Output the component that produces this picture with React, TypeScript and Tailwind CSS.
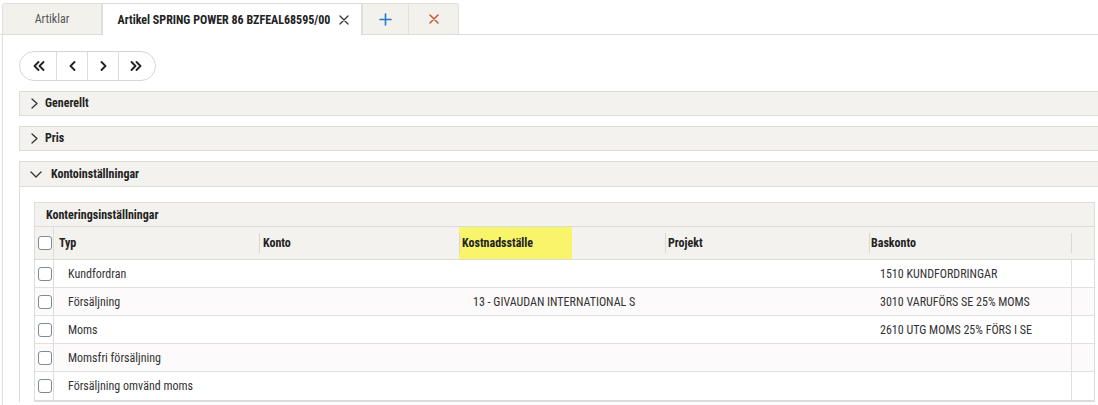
const FONT = "font-['Roboto_Condensed','Liberation_Sans_Narrow',Roboto,sans-serif]"

const rows = [
  { typ: 'Kundfordran', konto: '', kst: '', projekt: '', bas: '1510 KUNDFORDRINGAR' },
  { typ: 'Försäljning', konto: '', kst: '13 - GIVAUDAN INTERNATIONAL S', projekt: '', bas: '3010 VARUFÖRS SE 25% MOMS' },
  { typ: 'Moms', konto: '', kst: '', projekt: '', bas: '2610 UTG MOMS 25% FÖRS I SE' },
  { typ: 'Momsfri försäljning', konto: '', kst: '', projekt: '', bas: '' },
  { typ: 'Försäljning omvänd moms', konto: '', kst: '', projekt: '', bas: '' },
]

function Icon({ d, w, h, color, sw = 1.4 }: { d: string; w: number; h: number; color: string; sw?: number }) {
  return (
    <svg width={w} height={h} viewBox={`0 0 ${w} ${h}`} fill="none" stroke={color} strokeWidth={sw} strokeLinecap="round" strokeLinejoin="round">
      <path d={d} />
    </svg>
  )
}

function Box() {
  return <span className="block h-[14px] w-[14px] rounded-[3px] border border-[#7d8b96] bg-white" />
}

function Section({ title }: { title: string }) {
  return (
    <div className="flex h-[25px] w-[1090px] items-center border border-[#dddbd6] bg-[#f4f2ee] pb-px pl-[11px] text-[12px] font-bold text-[#222]">
      <span className="mr-[7px]">
        <Icon w={7} h={11} d="M1 1 L6 5.5 L1 10" color="#333" sw={1.3} />
      </span>
      {title}
    </div>
  )
}

export default function App() {
  return (
    <div className={`${FONT} h-[405px] w-[1098px] overflow-hidden bg-white`}>
      {/* tabs */}
      <div className="flex h-[35px] items-end border-b border-[#dcdcdc] pl-[2px] pt-[3px]">
        <div className="flex h-[31px] w-[100px] items-center justify-center rounded-tl-[3px] border border-b-0 border-[#e2e0dc] bg-[#f3f1ec] text-[12px] text-[#555]">
          Artiklar
        </div>
        <div className="-mb-px flex h-[32px] w-[260px] items-center justify-center gap-[9px] border border-b-0 border-[#dcdcdc] bg-white pl-[3px] text-[12px] font-bold text-[#222]">
          Artikel SPRING POWER 86 BZFEAL68595/00
          <Icon w={10} h={10} d="M1 1 L9 9 M9 1 L1 9" color="#333" sw={1.3} />
        </div>
        <div className="flex h-[31px] w-[47px] items-center justify-center border border-b-0 border-[#e2e0dc] bg-[#f3f1ec]">
          <Icon w={13} h={13} d="M6.5 1 V12 M1 6.5 H12" color="#1f78d1" sw={1.6} />
        </div>
        <div className="flex h-[31px] w-[50px] items-center justify-center rounded-tr-[3px] border border-b-0 border-l-0 border-[#e2e0dc] bg-[#f3f1ec]">
          <Icon w={10} h={10} d="M1 1 L9 9 M9 1 L1 9" color="#cf4a2c" sw={1.4} />
        </div>
      </div>

      <div className="ml-[2px] h-full border-l border-[#dcdcdc] pl-[16px] pt-[16px]">
        {/* pager */}
        <div className="flex h-[30px] w-[137px] overflow-hidden rounded-full border border-[#d6d6d6] bg-white">
          <div className="flex w-[37px] items-center justify-center border-r border-[#dcdcdc] pl-[2px]">
            <Icon w={12} h={10} d="M5.5 1 L1.5 5 L5.5 9 M10.5 1 L6.5 5 L10.5 9" color="#222" sw={1.8} />
          </div>
          <div className="flex w-[31px] items-center justify-center border-r border-[#dcdcdc]">
            <Icon w={7} h={10} d="M5.5 1 L1.5 5 L5.5 9" color="#222" sw={1.8} />
          </div>
          <div className="flex w-[31px] items-center justify-center border-r border-[#dcdcdc]">
            <Icon w={7} h={10} d="M1.5 1 L5.5 5 L1.5 9" color="#222" sw={1.8} />
          </div>
          <div className="flex flex-1 items-center justify-center pr-[2px]">
            <Icon w={12} h={10} d="M1.5 1 L5.5 5 L1.5 9 M6.5 1 L10.5 5 L6.5 9" color="#222" sw={1.8} />
          </div>
        </div>

        <div className="mt-[10px] flex flex-col gap-[10px]">
          <Section title="Generellt" />
          <Section title="Pris" />
          <div className="w-[1090px]">
            <div className="flex h-[26px] items-center border border-[#dddbd6] bg-[#f4f2ee] pl-[10px] text-[12px] font-bold text-[#222]">
              <span className="mr-[9px]">
                <Icon w={12} h={7} d="M1 1 L6 6 L11 1" color="#333" sw={1.3} />
              </span>
              Kontoinställningar
            </div>
            <div className="border-l border-[#dddbd6] pl-[14px] pt-[15px]">
              <div className="w-[1061px] border border-b-2 border-[#dcdcdc] text-[12px] text-[#333]">
                <div className="flex h-[24px] items-center border-b border-[#dcdcdc] bg-[#f4f2ee] pl-[11px] font-bold text-[#222]">
                  Konteringsinställningar
                </div>
                <div className="flex h-[33px] items-stretch border-b border-[#dcdcdc] bg-[#f4f2ee] font-bold text-[#222]">
                  <div className="flex w-[19px] items-center justify-center border-r border-[#dcdcdc] pl-[1px]">
                    <Box />
                  </div>
                  <div className="flex w-[205px] items-center pl-[5px]">Typ</div>
                  <div className="my-[6px] w-px bg-[#d8d8d8]" />
                  <div className="flex w-[199px] items-center pl-[3px]">Konto</div>
                  <div className="flex w-[113px] items-center bg-[#f8f56a] pl-[3px]">
                    <span className="-ml-[3px] mr-[2px] h-[21px] w-px bg-[#d8d8d8]" />
                    Kostnadsställe
                  </div>
                  <div className="w-[93px]" />
                  <div className="my-[6px] w-px bg-[#d8d8d8]" />
                  <div className="flex w-[203px] items-center pl-[2px]">Projekt</div>
                  <div className="my-[6px] w-px bg-[#d8d8d8]" />
                  <div className="flex w-[201px] items-center pl-[1px]">Baskonto</div>
                  <div className="my-[6px] w-px bg-[#d8d8d8]" />
                  <div className="flex-1" />
                </div>
                {rows.map((r, i) => (
                  <div
                    key={r.typ}
                    className={`flex h-[28px] items-stretch ${i < rows.length - 1 ? 'border-b border-[#e0e0e0]' : ''} ${i % 2 === 1 ? 'bg-[#fcfafa]' : 'bg-white'}`}
                  >
                    <div className="flex w-[19px] items-center justify-center border-r border-[#dcdcdc] pl-[1px]">
                      <Box />
                    </div>
                    <div className="flex w-[206px] items-center pl-[14px]">{r.typ}</div>
                    <div className="flex w-[199px] items-center">{r.konto}</div>
                    <div className="flex w-[207px] items-center pl-[14px]">{r.kst}</div>
                    <div className="flex w-[204px] items-center">{r.projekt}</div>
                    <div className="flex w-[201px] items-center pl-[10px]">{r.bas}</div>
                    <div className="flex-1 border-l border-[#e0e0e0]" />
                  </div>
                ))}
              </div>
            </div>
          </div>
        </div>
      </div>
    </div>
  )
}
